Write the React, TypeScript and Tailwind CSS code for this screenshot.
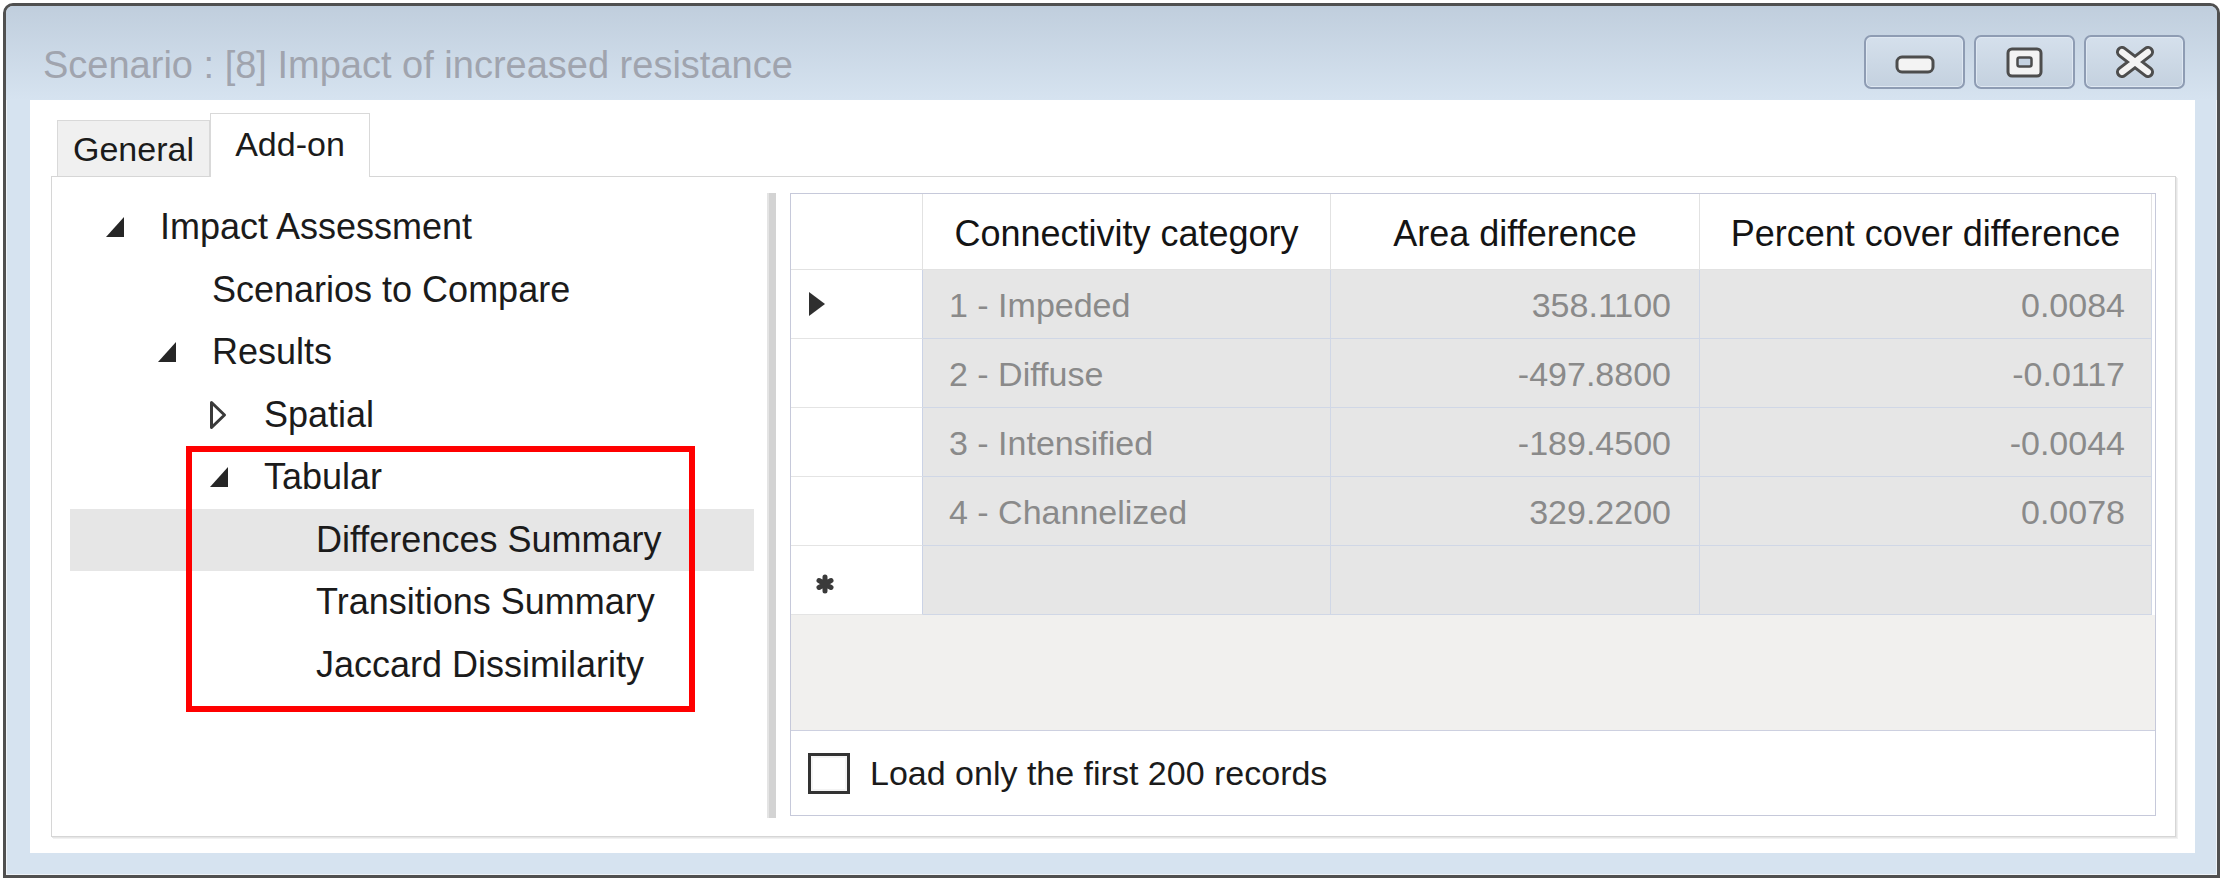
import React from "react";

type TreeNode = {
  label: string;
  level: 0 | 1 | 2 | 3;
  expander: "open" | "closed" | null;
  selected?: boolean;
};

const tree: TreeNode[] = [
  { label: "Impact Assessment", level: 0, expander: "open" },
  { label: "Scenarios to Compare", level: 1, expander: null },
  { label: "Results", level: 1, expander: "open" },
  { label: "Spatial", level: 2, expander: "closed" },
  { label: "Tabular", level: 2, expander: "open" },
  { label: "Differences Summary", level: 3, expander: null, selected: true },
  { label: "Transitions Summary", level: 3, expander: null },
  { label: "Jaccard Dissimilarity", level: 3, expander: null },
];

// indent before the expander slot, one per tree level
const indent = ["w-[35px]", "w-[87px]", "w-[139px]", "w-[191px]"];

const rows = [
  { cat: "1 - Impeded", area: "358.1100", pct: "0.0084", current: true },
  { cat: "2 - Diffuse", area: "-497.8800", pct: "-0.0117" },
  { cat: "3 - Intensified", area: "-189.4500", pct: "-0.0044" },
  { cat: "4 - Channelized", area: "329.2200", pct: "0.0078" },
];

function CaptionButton({ children, lower }: { children: React.ReactNode; lower?: boolean }) {
  return (
    <div
      className={`w-[101px] h-[54px] rounded-[7px] border-2 border-[#8e9cb3] bg-gradient-to-b from-[#d5e0ec] to-[#c4d1df] shadow-[inset_0_0_0_1px_#dfe8f2] flex justify-center ${
        lower ? "items-end pb-[12px]" : "items-center"
      }`}
    >
      {children}
    </div>
  );
}

function Expander({ kind }: { kind: "open" | "closed" | null }) {
  if (kind === "open")
    return (
      <svg width="20" height="22" viewBox="0 0 20 22">
        <polygon points="19,1 19,21 1,21" fill="#262626" />
      </svg>
    );
  if (kind === "closed")
    return (
      <svg width="18" height="30" viewBox="0 0 18 30">
        <polygon points="2.5,2.5 15.5,15 2.5,27.5" fill="#fff" stroke="#3a3a3a" strokeWidth="3" strokeLinejoin="round" />
      </svg>
    );
  return null;
}

export default function App() {
  return (
    <div className="w-[2224px] h-[881px] bg-white relative font-['Liberation_Sans',Arial,sans-serif] text-[#1b1b1b]">
      <div className="pl-[3px] pt-[3px]">
        {/* window frame */}
        <div className="w-[2217px] h-[875px] rounded-t-[10px] border-[3px] border-[#505050] bg-[#d6e3f0] shadow-[inset_0_0_0_1px_#eef3f8] flex flex-col overflow-hidden">
          {/* title bar */}
          <div className="h-[94px] shrink-0 bg-gradient-to-b from-[#c0cedd] to-[#d6e3f0] flex justify-between pl-[37px] pr-[32px]">
            <div className="mt-[40px] text-[38px] leading-none text-[#a0a4ae] whitespace-nowrap">
              Scenario : [8] Impact of increased resistance
            </div>
            <div className="mt-[29px] flex gap-[9px]">
              <CaptionButton lower>
                <svg width="40" height="20" viewBox="0 0 40 20">
                  <rect x="2" y="2" width="36" height="15" rx="5" fill="#f3f3f3" stroke="#4d4d4d" strokeWidth="3" />
                </svg>
              </CaptionButton>
              <CaptionButton>
                <svg width="37" height="31" viewBox="0 0 37 31">
                  <rect x="2" y="2" width="33" height="27" rx="4" fill="#f3f3f3" stroke="#4d4d4d" strokeWidth="3" />
                  <rect x="11.5" y="10.5" width="14" height="9" rx="2" fill="#c5d2e1" stroke="#4d4d4d" strokeWidth="2.5" />
                </svg>
              </CaptionButton>
              <CaptionButton>
                <svg width="40" height="32" viewBox="0 0 40 32">
                  <path d="M7 6 L33 26 M33 6 L7 26" stroke="#4d4d4d" strokeWidth="12" strokeLinecap="round" />
                  <path d="M7 6 L33 26 M33 6 L7 26" stroke="#f3f3f3" strokeWidth="6" strokeLinecap="round" />
                </svg>
              </CaptionButton>
            </div>
          </div>

          {/* client area */}
          <div className="ml-[24px] w-[2165px] h-[753px] bg-white">
            {/* tab strip */}
            <div className="h-[77px] pl-[27px] flex items-end relative z-10">
              <div className="w-[153px] h-[56px] mb-px border border-b-0 border-[#d9d9d9] bg-[#f0f0f0] flex items-center justify-center text-[34px] leading-none">
                General
              </div>
              <div className="w-[160px] h-[64px] border border-b-0 border-[#d9d9d9] bg-white flex items-center justify-center text-[34px] leading-none pb-[3px]">
                Add-on
              </div>
            </div>

            {/* tab page */}
            <div className="ml-[21px] -mt-px w-[2125px] h-[661px] border border-[#d6d6d6] shadow-[1px_1px_0_#e6e6e6,2px_2px_0_#f1f1f1] flex pt-[16px]">
              {/* tree */}
              <div className="w-[715px] shrink-0 pt-[3px]">
                {tree.map((n) => (
                  <div
                    key={n.label}
                    className={`ml-[18px] w-[684px] h-[62.5px] flex items-center ${n.selected ? "bg-[#e6e6e6]" : ""}`}
                  >
                    <div className={`${indent[n.level]} shrink-0`} />
                    <div className="w-[55px] shrink-0 flex items-center">
                      <Expander kind={n.expander} />
                    </div>
                    <span className="text-[36px] leading-none whitespace-nowrap">{n.label}</span>
                  </div>
                ))}
              </div>

              {/* splitter */}
              <div className="w-[9px] h-[625px] shrink-0 bg-[#d3d3d3] border-l-2 border-[#e4e4e4]" />

              {/* grid */}
              <div className="ml-[14px] w-[1366px] h-[623px] border border-[#c6c9da] flex flex-col">
                <div className="h-[76px] shrink-0 flex bg-white text-[36px] leading-none text-[#141414]">
                  <div className="w-[132px] border-r border-b border-[#e2e2e2]" />
                  <div className="w-[408px] border-r border-b border-[#e2e2e2] flex items-center justify-center pt-[4px]">
                    Connectivity category
                  </div>
                  <div className="w-[369px] border-r border-b border-[#e2e2e2] flex items-center justify-center pt-[4px]">
                    Area difference
                  </div>
                  <div className="w-[452px] border-r border-b border-[#e2e2e2] flex items-center justify-center pt-[4px]">
                    Percent cover difference
                  </div>
                </div>

                {rows.map((r) => (
                  <div key={r.cat} className="h-[69px] shrink-0 flex text-[34px] leading-none text-[#8a8a8a]">
                    <div className="w-[132px] bg-white border-r border-r-[#cbd3e6] border-b border-b-[#e4e4e4] flex items-center pl-[16px]">
                      {r.current && (
                        <svg width="20" height="28" viewBox="0 0 20 28">
                          <polygon points="2,2 18,14 2,26" fill="#2f2f2f" />
                        </svg>
                      )}
                    </div>
                    <div className="w-[408px] bg-[#e6e6e6] border-r border-b border-[#d0d7e6] flex items-center pl-[26px] pt-[2px]">
                      {r.cat}
                    </div>
                    <div className="w-[369px] bg-[#e6e6e6] border-r border-b border-[#d0d7e6] flex items-center justify-end pr-[28px] pt-[2px]">
                      {r.area}
                    </div>
                    <div className="w-[452px] bg-[#e6e6e6] border-r border-b border-[#d0d7e6] flex items-center justify-end pr-[26px] pt-[2px]">
                      {r.pct}
                    </div>
                  </div>
                ))}

                {/* new row */}
                <div className="h-[69px] shrink-0 flex">
                  <div className="w-[132px] bg-white border-r border-r-[#cbd3e6] border-b border-b-[#e4e4e4] flex items-center pl-[24px] pt-[8px]">
                    <svg width="20" height="20" viewBox="0 0 20 20">
                      <path d="M10 3 L10 17 M4 6.5 L16 13.5 M4 13.5 L16 6.5" stroke="#3a3a3a" strokeWidth="5" strokeLinecap="round" />
                    </svg>
                  </div>
                  <div className="w-[408px] bg-[#e6e6e6] border-r border-b border-[#d0d7e6]" />
                  <div className="w-[369px] bg-[#e6e6e6] border-r border-b border-[#d0d7e6]" />
                  <div className="w-[452px] bg-[#e6e6e6] border-r border-b border-[#d0d7e6]" />
                </div>

                <div className="flex-1 bg-[#f1f0ee]" />

                <div className="h-[85px] shrink-0 border-t border-[#cdd0e0] bg-white flex items-center pl-[17px] gap-[20px]">
                  <div className="w-[42px] h-[41px] border-[3px] border-[#333] bg-white shadow-[inset_0_0_0_2px_#f4f4f4]" />
                  <span className="text-[34px] leading-none whitespace-nowrap">Load only the first 200 records</span>
                </div>
              </div>
            </div>
          </div>
        </div>
      </div>

      {/* annotation */}
      <div className="absolute left-[186px] top-[446px] w-[509px] h-[266px] border-[6px] border-[#ff0000]" />
    </div>
  );
}
